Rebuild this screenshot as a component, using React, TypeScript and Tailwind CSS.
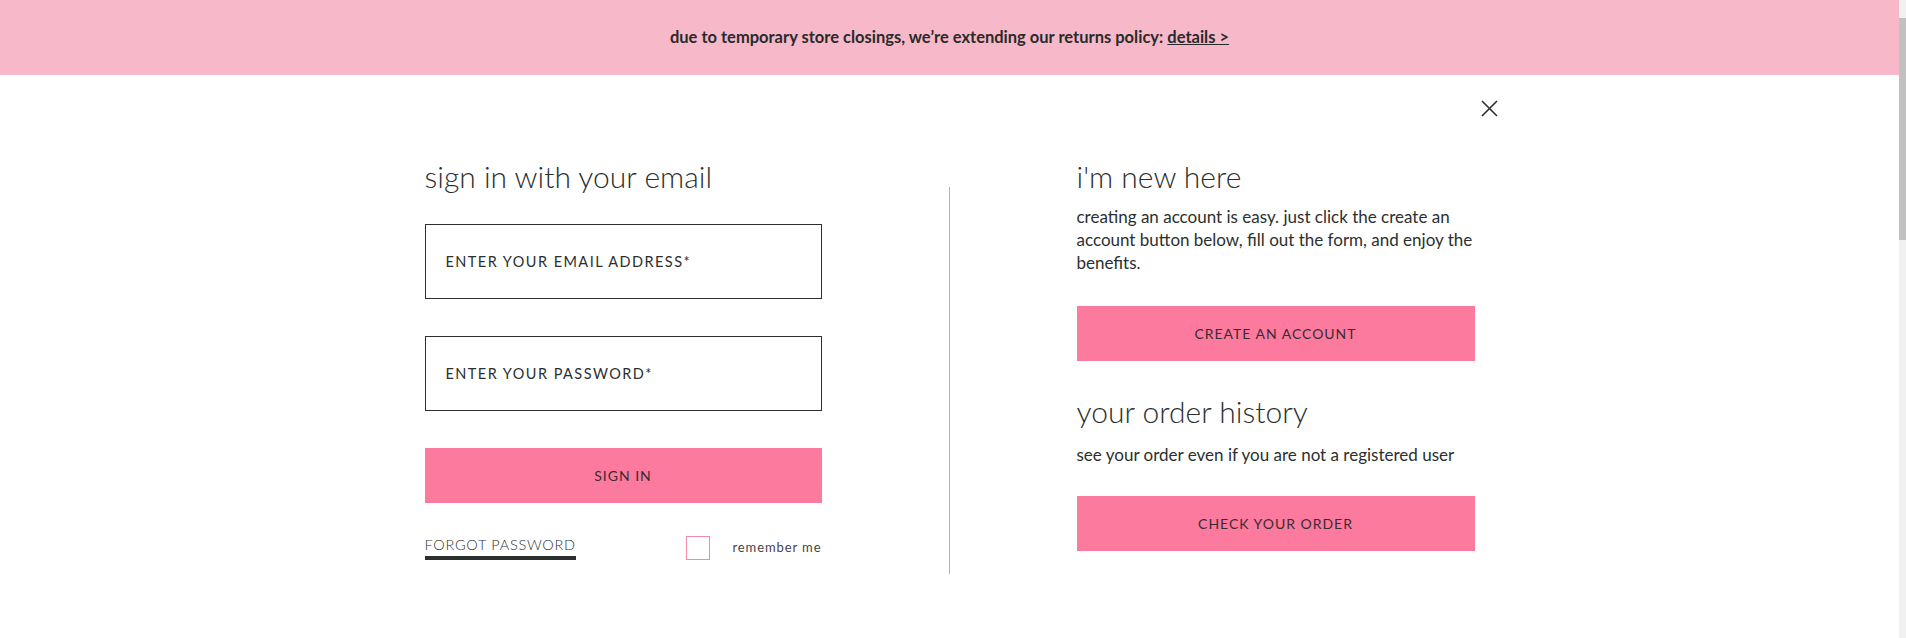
import React, { useState } from 'react'

const font = { fontFamily: 'Lato, "Noto Sans", sans-serif' }

function CloseIcon() {
  return (
    <svg width="17" height="17" viewBox="0 0 17 17" fill="none" stroke="#2b302f" strokeWidth="1.6">
      <path d="M1 1l15 15M16 1L1 16" />
    </svg>
  )
}

function PinkButton({ label }: { label: string }) {
  return (
    <button className="w-full h-[55px] bg-[#fc7a9e] text-[#3a2b31] text-[14px] tracking-[0.07em] uppercase font-normal">
      {label}
    </button>
  )
}

function Field({ placeholder, type }: { placeholder: string; type: string }) {
  return (
    <input
      type={type}
      placeholder={placeholder}
      className="w-full h-[75px] border border-[#2b302f] px-5 text-[14.5px] tracking-[0.1em] text-[#2b302f] placeholder:text-[#2b302f] outline-none"
    />
  )
}

export default function App() {
  const [remember, setRemember] = useState(false)

  return (
    <div className="flex h-[638px] overflow-hidden bg-white text-[#2b302f]" style={font}>
      <div className="flex-1 flex flex-col">
        {/* Banner */}
        <div className="h-[75px] bg-[#f7b9c9] flex items-center justify-center text-[16.5px] font-bold text-[#2a2a2a]">
          <span>
            due to temporary store closings, we’re extending our returns policy:{' '}
            <a href="#" className="underline">details &gt;</a>
          </span>
        </div>

        {/* Modal body */}
        <div className="relative w-[1100px] mx-auto">
          <button className="absolute right-[2px] top-[25px]" aria-label="Close">
            <CloseIcon />
          </button>

          <div className="flex justify-center pt-[86px]">
            {/* Sign in */}
            <div className="w-[397px]">
              <h2 className="text-[30px] font-light leading-none">sign in with your email</h2>
              <div className="mt-[33px] flex flex-col gap-[37px]">
                <Field placeholder="ENTER YOUR EMAIL ADDRESS*" type="email" />
                <Field placeholder="ENTER YOUR PASSWORD*" type="password" />
              </div>
              <div className="mt-[37px]">
                <PinkButton label="Sign in" />
              </div>
              <div className="mt-[32px] flex items-center justify-between">
                <a href="#" className="text-[14.5px] font-light tracking-[0.05em] border-b-4 border-[#2b302f] leading-[20px] pb-[1px]">
                  FORGOT PASSWORD
                </a>
                <label className="flex items-center gap-[22px] cursor-pointer">
                  <span
                    onClick={() => setRemember(!remember)}
                    className="w-[24px] h-[24px] border border-[#f28aa8] flex items-center justify-center"
                  >
                    {remember && <span className="w-[12px] h-[12px] bg-[#fc7a9e]" />}
                  </span>
                  <span className="text-[13px] tracking-[0.07em] text-[#444]">remember me</span>
                </label>
              </div>
            </div>

            {/* Divider */}
            <div className="w-px bg-[#a9b5b8] mx-[127px] mt-[26px] h-[387px]" />

            {/* New here */}
            <div className="w-[398px]">
              <h2 className="text-[30px] font-light leading-none">i'm new here</h2>
              <p className="mt-[14px] text-[17px] leading-[23px] font-normal">
                creating an account is easy. just click the create an account button below, fill out the form, and enjoy the benefits.
              </p>
              <div className="mt-[32px]">
                <PinkButton label="Create an account" />
              </div>
              <h2 className="mt-[35px] text-[30px] font-light leading-none">your order history</h2>
              <p className="mt-[17px] text-[17px] leading-[23px]">see your order even if you are not a registered user</p>
              <div className="mt-[30px]">
                <PinkButton label="Check your order" />
              </div>
            </div>
          </div>
        </div>
      </div>

      {/* Scrollbar */}
      <div className="w-[7px] bg-[#f1f1f1] flex flex-col">
        <div className="h-[18px]" />
        <div className="h-[222px] bg-[#c1c1c1]" />
      </div>
    </div>
  )
}
